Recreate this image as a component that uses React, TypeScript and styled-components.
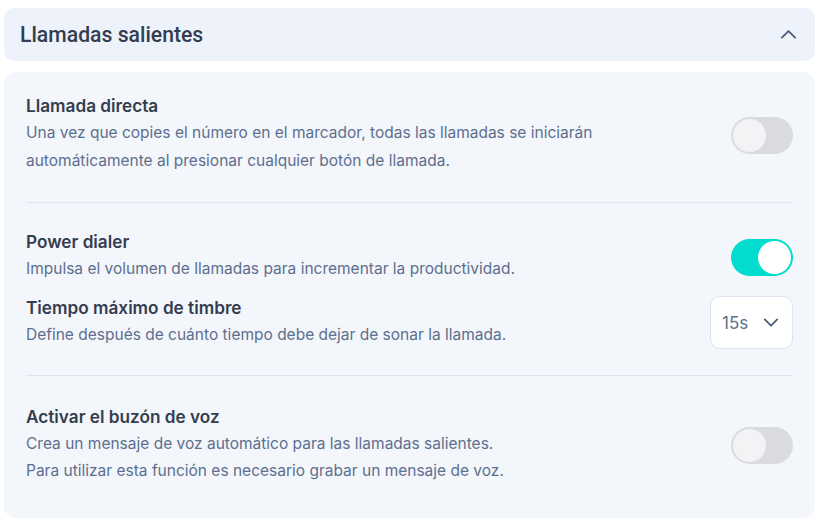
import React, { useState } from "react";
import styled, { createGlobalStyle } from "styled-components";

const Global = createGlobalStyle`
  * { box-sizing: border-box; }
  body { margin: 0; background: #ffffff; font-family: Inter, "Noto Sans", sans-serif; }
`;

const Page = styled.div`
  padding: 8px 9px 2px 4px;
  display: flex;
  flex-direction: column;
  gap: 11px;
`;

const Header = styled.div`
  height: 53px;
  background: #eef2fa;
  border-radius: 10px;
  display: flex;
  align-items: center;
  justify-content: space-between;
  padding: 0 18px 0 16px;
`;

const HeaderTitle = styled.h2`
  margin: 0;
  font-family: Roboto, "Liberation Sans", sans-serif;
  font-weight: 500;
  font-size: 21.2px;
  color: #333d4f;
`;

const Card = styled.div`
  background: #f3f6fb;
  border-radius: 12px;
  padding: 0 22px;
  height: 446px;
`;

const Section = styled.div<{ top: number; bottom: number; gap?: number }>`
  padding: ${(p) => `${p.top}px 0 ${p.bottom}px`};
  display: flex;
  flex-direction: column;
  gap: ${(p) => p.gap ?? 0}px;
`;

const Divider = styled.div`
  height: 1px;
  background: #dfe3f0;
`;

const Row = styled.div`
  display: flex;
  align-items: center;
  justify-content: space-between;
  gap: 24px;
`;

const Texts = styled.div`
  display: flex;
  flex-direction: column;
  gap: 2px;
`;

const Title = styled.div`
  font-size: 17.2px;
  font-weight: 600;
  line-height: 22px;
  color: #333d4f;
`;

const Desc = styled.div<{ lh: number }>`
  font-size: 15.5px;
  line-height: ${(p) => p.lh}px;
  color: #5d6f8e;
  max-width: 620px;
`;

const Track = styled.button<{ on: boolean }>`
  width: 62px;
  height: 37px;
  border-radius: 19px;
  border: none;
  padding: 2px;
  flex-shrink: 0;
  cursor: pointer;
  display: flex;
  justify-content: ${(p) => (p.on ? "flex-end" : "flex-start")};
  align-items: center;
  background: ${(p) => (p.on ? "#00dccd" : "#dadbe0")};
`;

const Knob = styled.span<{ on: boolean }>`
  width: 33px;
  height: 33px;
  border-radius: 50%;
  background: ${(p) => (p.on ? "#ffffff" : "#f3f3f5")};
`;

const Select = styled.div`
  width: 83px;
  height: 53px;
  background: #ffffff;
  border: 1px solid #dde3f1;
  border-radius: 10px;
  display: flex;
  align-items: center;
  justify-content: space-between;
  padding: 0 13px 0 11px;
  font-size: 17px;
  color: #5d6f8e;
  flex-shrink: 0;
`;

const Toggle = ({ initial }: { initial: boolean }) => {
  const [on, setOn] = useState(initial);
  return (
    <Track on={on} onClick={() => setOn(!on)} aria-pressed={on}>
      <Knob on={on} />
    </Track>
  );
};

const Chevron = ({ up, color, w }: { up?: boolean; color: string; w: number }) => (
  <svg width={w} height={w * 0.6} viewBox="0 0 16 10" fill="none">
    <path
      d={up ? "M1.5 8.5 L8 2 L14.5 8.5" : "M1.5 1.5 L8 8 L14.5 1.5"}
      stroke={color}
      strokeWidth="1.8"
      strokeLinecap="round"
      strokeLinejoin="round"
    />
  </svg>
);

export default function App() {
  return (
    <>
      <Global />
      <Page>
        <Header>
          <HeaderTitle>Llamadas salientes</HeaderTitle>
          <Chevron up color="#4b5b78" w={17} />
        </Header>
        <Card>
          <Section top={23} bottom={27}>
            <Row>
              <Texts>
                <Title>Llamada directa</Title>
                <Desc lh={28}>
                  Una vez que copies el número en el marcador, todas las llamadas se iniciarán
                  automáticamente al presionar cualquier botón de llamada.
                </Desc>
              </Texts>
              <Toggle initial={false} />
            </Row>
          </Section>
          <Divider />
          <Section top={28} bottom={26} gap={13}>
            <Row>
              <Texts>
                <Title>Power dialer</Title>
                <Desc lh={28}>Impulsa el volumen de llamadas para incrementar la productividad.</Desc>
              </Texts>
              <Toggle initial={true} />
            </Row>
            <Row>
              <Texts>
                <Title>Tiempo máximo de timbre</Title>
                <Desc lh={28}>Define después de cuánto tiempo debe dejar de sonar la llamada.</Desc>
              </Texts>
              <Select>
                <span>15s</span>
                <Chevron color="#4b5b78" w={16} />
              </Select>
            </Row>
          </Section>
          <Divider />
          <Section top={30} bottom={20}>
            <Row>
              <Texts>
                <Title>Activar el buzón de voz</Title>
                <Desc lh={27}>
                  Crea un mensaje de voz automático para las llamadas salientes.
                  <br />
                  Para utilizar esta función es necesario grabar un mensaje de voz.
                </Desc>
              </Texts>
              <Toggle initial={false} />
            </Row>
          </Section>
        </Card>
      </Page>
    </>
  );
}
